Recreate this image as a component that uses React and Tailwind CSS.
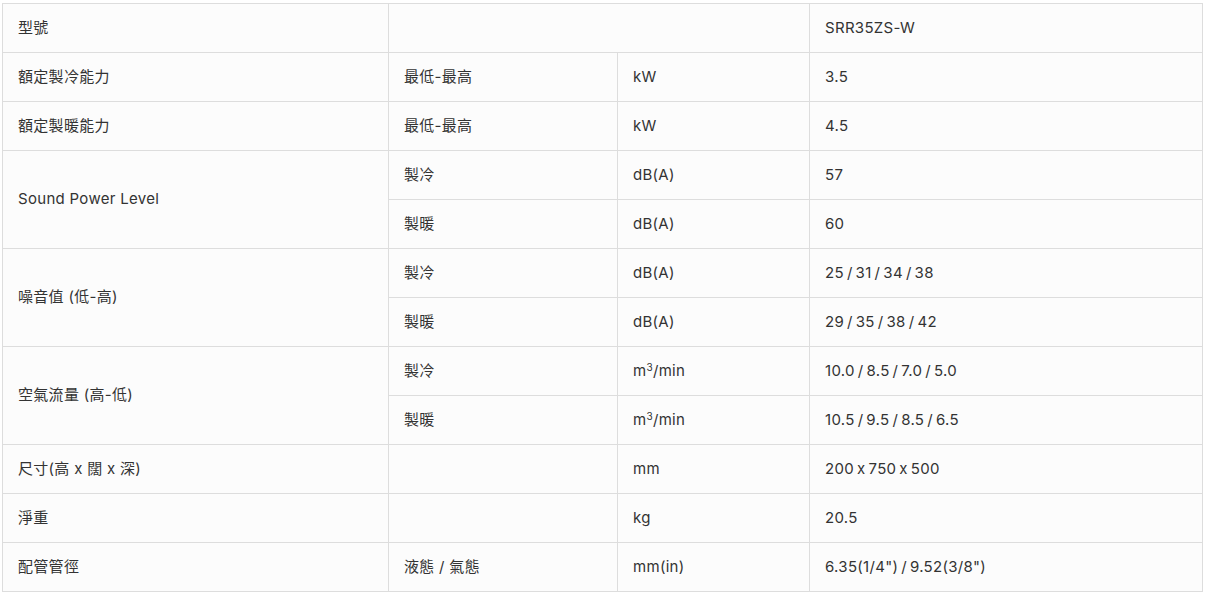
import React from "react";

const td = "border border-[#dddddd] px-[15px] h-[49px] align-middle";
const tv = "border border-[#dddddd] px-[15px] h-[49px] align-middle [word-spacing:-1.5px]";

function Sup() {
  return (
    <span>
      m<sup className="text-[10px]">3</sup>/min
    </span>
  );
}

export default function App() {
  return (
    <div
      className="bg-white w-[1205px] h-[596px] pt-[3px] pl-[2px]"
      style={{ fontFamily: '"Inter", "Noto Sans CJK TC", sans-serif', fontFeatureSettings: '"calt" 0' }}
    >
      <table className="border-collapse text-[15px] tracking-[0.3px] text-[#333333] bg-[#fcfcfc] table-fixed w-[1200px]">
        <colgroup>
          <col className="w-[386px]" />
          <col className="w-[229px]" />
          <col className="w-[192px]" />
          <col className="w-[393px]" />
        </colgroup>
        <tbody>
          <tr>
            <td className={td}>型號</td>
            <td className={td} colSpan={2}></td>
            <td className={tv}>SRR35ZS-W</td>
          </tr>
          <tr>
            <td className={td}>額定製冷能力</td>
            <td className={td}>最低-最高</td>
            <td className={td}>kW</td>
            <td className={tv}>3.5</td>
          </tr>
          <tr>
            <td className={td}>額定製暖能力</td>
            <td className={td}>最低-最高</td>
            <td className={td}>kW</td>
            <td className={tv}>4.5</td>
          </tr>
          <tr>
            <td className={td} rowSpan={2}>Sound Power Level</td>
            <td className={td}>製冷</td>
            <td className={td}>dB(A)</td>
            <td className={tv}>57</td>
          </tr>
          <tr>
            <td className={td}>製暖</td>
            <td className={td}>dB(A)</td>
            <td className={tv}>60</td>
          </tr>
          <tr>
            <td className={td} rowSpan={2}>噪音值 (低-高)</td>
            <td className={td}>製冷</td>
            <td className={td}>dB(A)</td>
            <td className={tv}>25 / 31 / 34 / 38</td>
          </tr>
          <tr>
            <td className={td}>製暖</td>
            <td className={td}>dB(A)</td>
            <td className={tv}>29 / 35 / 38 / 42</td>
          </tr>
          <tr>
            <td className={td} rowSpan={2}>空氣流量 (高-低)</td>
            <td className={td}>製冷</td>
            <td className={td}><Sup /></td>
            <td className={tv}>10.0 / 8.5 / 7.0 / 5.0</td>
          </tr>
          <tr>
            <td className={td}>製暖</td>
            <td className={td}><Sup /></td>
            <td className={tv}>10.5 / 9.5 / 8.5 / 6.5</td>
          </tr>
          <tr>
            <td className={td}>尺寸(高 x 闊 x 深)</td>
            <td className={td}></td>
            <td className={td}>mm</td>
            <td className={tv}>200 x 750 x 500</td>
          </tr>
          <tr>
            <td className={td}>淨重</td>
            <td className={td}></td>
            <td className={td}>kg</td>
            <td className={tv}>20.5</td>
          </tr>
          <tr>
            <td className={td}>配管管徑</td>
            <td className={td}>液態 / 氣態</td>
            <td className={td}>mm(in)</td>
            <td className={tv}>6.35(1/4") / 9.52(3/8")</td>
          </tr>
        </tbody>
      </table>
    </div>
  );
}
